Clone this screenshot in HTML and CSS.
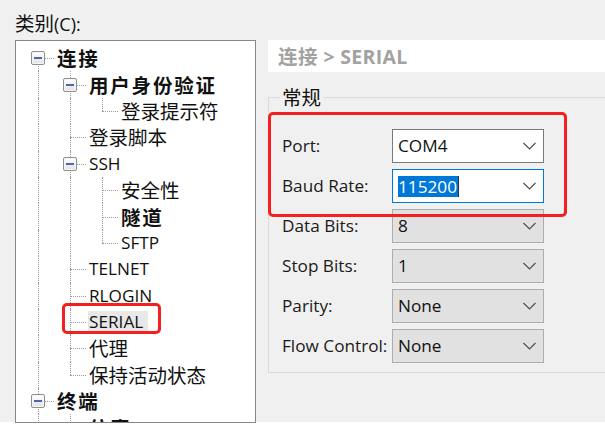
FILE: index.html
```html
<!DOCTYPE html>
<html lang="zh-CN">
<head>
<meta charset="utf-8">
<title>SERIAL</title>
<link rel="stylesheet" href="styles.css">
</head>
<body>
<div class="win">
  <div class="cat-label">类别<span class="lat cat-lat">(C):</span></div>
  <div class="main">
    <div class="tree">
      <div class="node"><span class="g d"><span class="x"></span></span><span class="txt b">连接</span></div>
      <div class="node"><span class="g v"></span><span class="g t"><span class="x"></span></span><span class="txt b">用户身份验证</span></div>
      <div class="node"><span class="g v"></span><span class="g v"></span><span class="g l"></span><span class="txt">登录提示符</span></div>
      <div class="node"><span class="g v"></span><span class="g t"></span><span class="txt">登录脚本</span></div>
      <div class="node"><span class="g v"></span><span class="g t"><span class="x"></span></span><span class="txt lat">SSH</span></div>
      <div class="node"><span class="g v"></span><span class="g v"></span><span class="g t"></span><span class="txt">安全性</span></div>
      <div class="node"><span class="g v"></span><span class="g v"></span><span class="g t"></span><span class="txt b">隧道</span></div>
      <div class="node"><span class="g v"></span><span class="g v"></span><span class="g l"></span><span class="txt lat">SFTP</span></div>
      <div class="node"><span class="g v"></span><span class="g t"></span><span class="txt lat">TELNET</span></div>
      <div class="node"><span class="g v"></span><span class="g t"></span><span class="txt lat">RLOGIN</span></div>
      <div class="node"><span class="g v"></span><span class="g t"></span><span class="txt lat sel-node">SERIAL</span></div>
      <div class="node"><span class="g v"></span><span class="g t"></span><span class="txt">代理</span></div>
      <div class="node"><span class="g v"></span><span class="g l"></span><span class="txt">保持活动状态</span></div>
      <div class="node"><span class="g t"><span class="x"></span></span><span class="txt b">终端</span></div>
      <div class="node"><span class="g v"></span><span class="g t"></span><span class="txt b">仿真</span></div>
      <div class="mark mark-serial"></div>
    </div>
    <div class="pane">
      <div class="crumb">连接<span class="lat crumb-lat"> &gt; SERIAL</span></div>
      <fieldset class="group">
        <legend>常规</legend>
        <div class="form">
          <div class="row"><span class="lbl lat">Port:</span><div class="combo c-white"><span class="val lat">COM4</span><svg class="chev" width="13" height="8" viewBox="0 0 13 8"><polyline points="0.5,1 6.5,7 12.5,1" fill="none" stroke="#505050" stroke-width="1.2"/></svg></div></div>
          <div class="row"><span class="lbl lat">Baud Rate:</span><div class="combo c-focus"><span class="val lat"><span class="hl">115200</span><span class="caret"></span></span><svg class="chev" width="13" height="8" viewBox="0 0 13 8"><polyline points="0.5,1 6.5,7 12.5,1" fill="none" stroke="#505050" stroke-width="1.2"/></svg></div></div>
          <div class="row"><span class="lbl lat">Data Bits:</span><div class="combo c-gray"><span class="val lat">8</span><svg class="chev" width="13" height="8" viewBox="0 0 13 8"><polyline points="0.5,1 6.5,7 12.5,1" fill="none" stroke="#505050" stroke-width="1.2"/></svg></div></div>
          <div class="row"><span class="lbl lat">Stop Bits:</span><div class="combo c-gray"><span class="val lat">1</span><svg class="chev" width="13" height="8" viewBox="0 0 13 8"><polyline points="0.5,1 6.5,7 12.5,1" fill="none" stroke="#505050" stroke-width="1.2"/></svg></div></div>
          <div class="row"><span class="lbl lat">Parity:</span><div class="combo c-gray"><span class="val lat">None</span><svg class="chev" width="13" height="8" viewBox="0 0 13 8"><polyline points="0.5,1 6.5,7 12.5,1" fill="none" stroke="#505050" stroke-width="1.2"/></svg></div></div>
          <div class="row"><span class="lbl lat">Flow Control:</span><div class="combo c-gray"><span class="val lat">None</span><svg class="chev" width="13" height="8" viewBox="0 0 13 8"><polyline points="0.5,1 6.5,7 12.5,1" fill="none" stroke="#505050" stroke-width="1.2"/></svg></div></div>
        </div>
      </fieldset>
      <div class="mark mark-port"></div>
    </div>
  </div>
</div>
</body>
</html>
```

FILE: styles.css
```css
html, body {
  margin: 0;
  padding: 0;
}
body {
  font-family: "Noto Sans CJK SC", "Noto Sans", sans-serif;
  font-size: 19.5px;
  color: #111;
}
.lat {
  font-family: "Open Sans", "Noto Sans CJK SC", sans-serif;
  font-size: 17.2px;
}
.win {
  width: 605px;
  height: 425px;
  overflow: hidden;
  background: #ffffff;
}
.cat-label {
  height: 40px;
  box-sizing: border-box;
  padding: 12px 0 0 15px;
  line-height: 22px;
  background: #f0f0f0;
}
.cat-lat {
  font-size: 18px;
}
.main {
  display: flex;
  height: 382px;
  background: #f0f0f0;
}
.tree {
  position: relative;
  flex: none;
  width: 241px;
  height: 383px;
  margin-left: 15px;
  box-sizing: border-box;
  border: 1px solid #828790;
  background: #fff;
  padding-top: 4px;
  overflow: hidden;
}
.node {
  display: flex;
  height: 26.4px;
  padding-left: 6px;
}
.g {
  position: relative;
  flex: none;
  width: 32px;
}
.g::before,
.g::after {
  content: "";
  position: absolute;
}
.g.v::before,
.g.t::before {
  left: 16px;
  top: 0;
  bottom: 0;
  border-left: 1px dotted #9a9a9a;
}
.g.l::before {
  left: 16px;
  top: 0;
  bottom: 50%;
  border-left: 1px dotted #9a9a9a;
}
.g.d::before {
  left: 16px;
  top: 50%;
  bottom: 0;
  border-left: 1px dotted #9a9a9a;
}
.g.t::after,
.g.l::after,
.g.d::after {
  left: 16px;
  right: 0;
  top: 50%;
  border-top: 1px dotted #9a9a9a;
}
.x {
  position: absolute;
  z-index: 1;
  left: 9px;
  top: calc(50% - 7px);
  width: 14px;
  height: 14px;
  box-sizing: border-box;
  border: 1px solid #8e8f8f;
  border-radius: 2px;
  background: linear-gradient(#ffffff, #e2e2e2);
  box-shadow: inset 0 0 0 1px #f7f7f7;
}
.x::after {
  content: "";
  position: absolute;
  left: 2px;
  right: 2px;
  top: 5px;
  height: 2px;
  background: #4b67b0;
}
.txt {
  align-self: center;
  margin-left: 2px;
  padding: 0 1px;
  line-height: 22px;
  white-space: nowrap;
}
.b {
  font-weight: bold;
  letter-spacing: 1.8px;
}
.sel-node {
  background: #e8e8e8;
  padding-right: 5px;
}
.mark {
  position: absolute;
  box-sizing: border-box;
  border: 3px solid #f41f1f;
  border-radius: 5px;
  z-index: 2;
}
.mark-serial {
  left: 46px;
  top: 262px;
  width: 99px;
  height: 31px;
}
.pane {
  position: relative;
  flex: none;
  width: 360px;
  margin-left: 12px;
}
.crumb {
  height: 32px;
  line-height: 32px;
  padding-left: 10px;
  background: #fff;
  color: #a2a2a2;
  font-weight: bold;
  letter-spacing: 0.5px;
  white-space: nowrap;
}
.crumb-lat {
  font-size: 19.5px;
  letter-spacing: 0.3px;
}
.group {
  margin: 14px 0 0 0;
  padding: 0 0 9px 13px;
  border: 1px solid #dadada;
  min-width: 0;
}
.group legend {
  padding: 0 2px;
  margin-left: -2px;
  line-height: 22px;
}
.form {
  display: flex;
  flex-direction: column;
  gap: 6px;
  padding-top: 21px;
}
.row {
  display: flex;
  align-items: center;
  height: 34px;
}
.lbl {
  flex: none;
  width: 110px;
  white-space: nowrap;
  line-height: 22px;
  color: #1a1a1a;
}
.combo {
  flex: none;
  display: flex;
  align-items: center;
  justify-content: space-between;
  width: 152px;
  height: 34px;
  box-sizing: border-box;
  padding: 0 7px 0 5px;
  border: 1px solid #adadad;
}
.c-white {
  background: #fff;
  border-color: #7a7a7a;
}
.c-focus {
  background: #fff;
  border-color: #0078d7;
}
.c-gray {
  background: #e1e1e1;
  border-color: #adadad;
}
.val {
  display: flex;
  align-items: center;
  line-height: 22px;
}
.hl {
  background: #0078d7;
  color: #fff;
  line-height: 21px;
  padding: 0 1px 0 0;
}
.caret {
  width: 1px;
  height: 21px;
  background: #333;
}
.chev {
  display: block;
}
.mark-port {
  left: 0;
  top: 72px;
  width: 299px;
  height: 105px;
}
```
